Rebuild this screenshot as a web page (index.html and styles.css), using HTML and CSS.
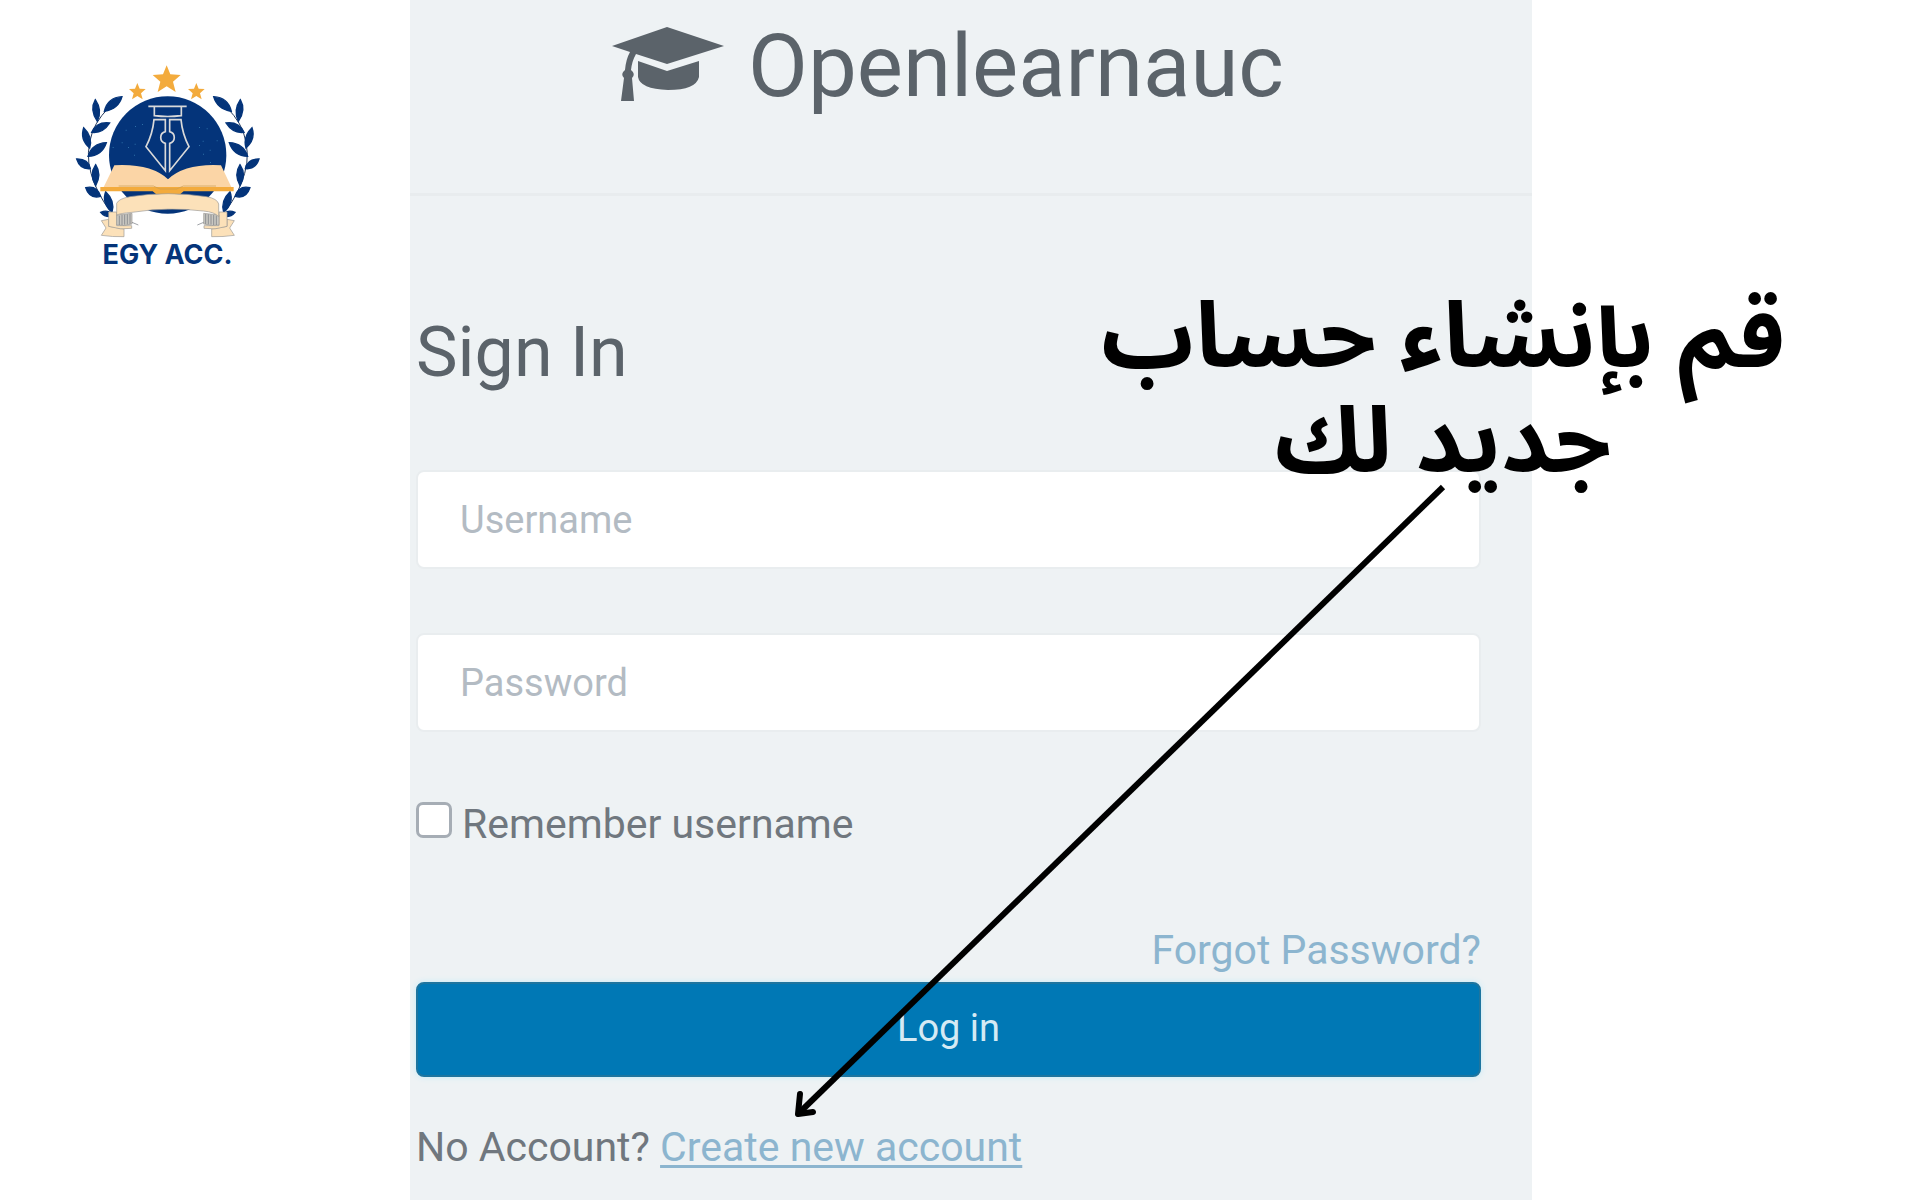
FILE: index.html
```html
<!DOCTYPE html>
<html lang="en">

<head>
    <meta charset="UTF-8">
    <meta name="viewport" content="width=device-width, initial-scale=1.0">
    <title>Openlearnauc - Sign In</title>
    <link rel="stylesheet" href="styles.css">
</head>

<body>
    <aside class="brand">
        <svg class="brand-logo" viewBox="0 0 660 570" aria-hidden="true">
            <circle cx="323" cy="315" r="176" fill="#04347a" />
            <!-- stars -->
            <g fill="#f3ab3d">
                <path d="M320 46l11 27 31 2-23 20 8 31-27-17-27 17 8-31-23-20 31-2z" />
                <path d="M232 99l7 17 18 1-14 13 5 18-16-10-16 10 5-18-14-13 18-1z" />
                <path d="M409 99l7 17 18 1-14 13 5 18-16-10-16 10 5-18-14-13 18-1z" />
            </g>
            <!-- pen nib -->
            <g fill="none" stroke="#d9d9d9" stroke-width="5">
                <path d="M265 169h115M283 169v28q40 5 81 0v-28M282 209h34v36a18 18 0 0 0 0 35v82l-58-72q20-38 24-81zM363 209h-34v36a18 18 0 0 1 0 35v82l58-72q-20-38-24-81z" />
            </g>
            <g fill="#2d6fa8">
                <path d="M225 228h3v3h-3zM246 222h3v3h-3zM197 239h3v3h-3zM185 277h3v3h-3zM204 291h3v3h-3zM158 291h3v3h-3zM222 314h3v3h-3zM224 281h3v3h-3zM417 231h3v3h-3zM440 235h3v3h-3zM428 272h3v3h-3zM449 299h3v3h-3zM417 285h3v3h-3zM429 311h3v3h-3zM450 336h3v3h-3zM470 271h3v3h-3z" />
            </g>
            <!-- laurel branch, drawn once and mirrored -->
            <g id="branch">
                <path d="M168 153Q118 195 98 243Q75 310 93 370Q110 430 150 482" fill="none" stroke="#24395c" stroke-width="3" />
                <g fill="#04347a" stroke="#04347a" stroke-width="4">
                    <path d="M133 184Q143 142 186 140Q176 177 133 184z" />
                    <path d="M112 214Q88 180 106 149Q128 181 112 214z" />
                    <path d="M95 247Q111 214 149 219Q129 251 95 247z" />
                    <path d="M89 294Q59 268 71 233Q99 260 89 294z" />
                    <path d="M84 319Q96 280 139 278Q126 317 84 319z" />
                    <path d="M91 356Q60 359 50 327Q85 326 91 356z" />
                    <path d="M107 407Q86 375 107 344Q126 373 107 407z" />
                    <path d="M122 439Q88 448 77 413Q111 405 122 439z" />
                    <path d="M156 487Q124 458 137 425Q166 452 156 487z" />
                    <path d="M122 487Q140 479 153 489L149 500Q132 500 122 487z" />
                </g>
            </g>
            <use href="#branch" transform="translate(647 0) scale(-1 1)" />
            <!-- open book -->
            <path d="M163 346Q273 340 324 388Q375 340 483 346L515 413H130z" fill="#fbd5a6" />
            <path d="M121 411H521v13H371l-10 8H288l-10-8H121z" fill="#f3ab3d" />
            <path d="M176 408H280l20 9h50l20-9h98" fill="none" stroke="#c99b50" stroke-width="2" />
            <!-- ribbon -->
            <g id="ribbon" stroke="#9b9994" stroke-width="2">
                <path d="M146 508l-22 4 14 22-14 22q34 5 68 4v-23l-46-8z" fill="#fce1b9" />
                <path d="M146 486h24v41h45v8q-32 6-69-6z" fill="#fce1b9" />
                <path d="M170 495l46-5v32q-24 8-46 3z" fill="#c9c7c1" />
                <path d="M178 497v28M186 495v30M194 494v30M202 493v30M210 492v30M216 517l19 8" stroke="#6f747c" />
            </g>
            <use href="#ribbon" transform="translate(647 0) scale(-1 1)" />
            <path d="M170 495V460Q176 446 210 440Q323 422 440 440Q472 446 476 462V500Q464 486 430 483Q323 470 216 487Q180 490 170 495z" fill="#fce1b9" stroke="#9b9994" stroke-width="2" />
        </svg>
        <p class="brand-name">EGY ACC.</p>
    </aside>

    <main class="panel">
        <header class="site-header">
            <svg class="cap" viewBox="0 0 112 75" aria-hidden="true">
                <path d="M55 0L112 19L55 37L24 27Q20 34 19 43Q24 47 20 51L22 74H9L12 51Q8 47 13 43Q14 32 18 25L0 19z" />
                <path d="M26 34L55 44L87 34V50Q84 63 56 63Q28 62 26 50z" />
            </svg>
            <h1>Openlearnauc</h1>
        </header>

        <form class="login">
            <h2>Sign In</h2>
            <input class="field" type="text" placeholder="Username" aria-label="Username">
            <input class="field" type="password" placeholder="Password" aria-label="Password">
            <div class="remember">
                <input type="checkbox" id="remember">
                <label for="remember">Remember username</label>
            </div>
            <a class="forgot" href="#">Forgot Password?</a>
            <button type="submit">Log in</button>
            <p class="signup">No Account? <a href="#">Create new account</a></p>
        </form>
    </main>

    <p class="note" lang="ar" dir="rtl">قم بإنشاء حساب<br>جديد لك</p>
    <svg class="arrow" viewBox="0 0 660 640" aria-hidden="true">
        <path d="M653 5L8 632" />
        <path class="arrow-head" d="M10 612L8 632L23 630" />
    </svg>
</body>

</html>
```
FILE: styles.css
```css
* {
    box-sizing: border-box;
}

body {
    position: relative;
    display: grid;
    grid-template-columns: 410fr 1122fr 388fr;
    min-height: 100vh;
    margin: 0;
    background-color: white;
    color: #5b636a;
    font-family: Roboto, Arial, sans-serif;
    font-size: 41px;
    overflow-x: hidden;
}

h1,
h2,
p {
    margin: 0;
    font-weight: 400;
}

.brand {
    width: 220px;
    margin: 50px 0 0 60px;
    text-align: center;
}

.brand-logo {
    display: block;
    width: 220px;
    height: 190px;
}

.brand-name {
    padding-right: 5px;
    color: #04347a;
    font-family: Inter, sans-serif;
    font-size: 27px;
    font-weight: 700;
    line-height: 30px;
}

.panel {
    background-color: #eef2f4;
}

.site-header {
    display: flex;
    justify-content: center;
    gap: 24px;
    height: 196px;
    padding-right: 46px;
    border-bottom: 3px solid #e8ecee;
}

.cap {
    width: 112px;
    height: 75px;
    margin-top: 27px;
    fill: #5b636a;
}

h1 {
    margin-top: 16px;
    font-size: 87px;
    line-height: 100px;
}

.login {
    display: flex;
    flex-direction: column;
    padding: 116px 51px 0 6px;
}

h2 {
    font-size: 70px;
    line-height: 80px;
}

.login h2 {
    margin-bottom: 78px;
}

.field {
    height: 99px;
    margin: 0 0 64px;
    padding: 0 42px;
    border: 2px solid #e9edef;
    border-radius: 8px;
    background-color: white;
    color: #5b636a;
    font: inherit;
    font-size: 38px;
}

.field::placeholder {
    color: #b3bbc3;
    opacity: 1;
}

.remember {
    display: flex;
    align-items: center;
    gap: 10px;
    height: 48px;
}

.remember input {
    appearance: none;
    width: 36px;
    height: 36px;
    margin: 0;
    border: 3px solid #a6adb5;
    border-radius: 7px;
    background-color: white;
}

.remember label {
    padding-top: 8px;
    color: #70777e;
}

.forgot {
    align-self: flex-end;
    margin-top: 82px;
    color: #8cb5cf;
    line-height: 48px;
    text-decoration: none;
}

button {
    height: 95px;
    margin-top: 8px;
    padding-bottom: 4px;
    border: 2px solid #1e759f;
    border-radius: 8px;
    background-color: #0078b5;
    box-shadow: 0 0 6px #c4ebf8;
    color: #d5eaf4;
    font: inherit;
    font-size: 38px;
}

.signup {
    margin-top: 46px;
    color: #70777e;
    line-height: 48px;
}

.signup a {
    color: #8cb5cf;
    text-underline-offset: 4px;
    text-decoration-thickness: 3px;
}

/* annotation on top of the login page */
.note {
    position: absolute;
    top: 286px;
    left: 1083px;
    width: 720px;
    color: black;
    font-family: "Noto Sans Arabic", "DejaVu Sans", sans-serif;
    font-size: 92px;
    font-weight: 700;
    line-height: 105px;
    text-align: center;
}

.arrow {
    position: absolute;
    top: 482px;
    left: 790px;
    width: 660px;
    height: 640px;
    fill: none;
    stroke: black;
    stroke-width: 6;
}

.arrow-head {
    stroke-linecap: round;
    stroke-linejoin: round;
}
```
